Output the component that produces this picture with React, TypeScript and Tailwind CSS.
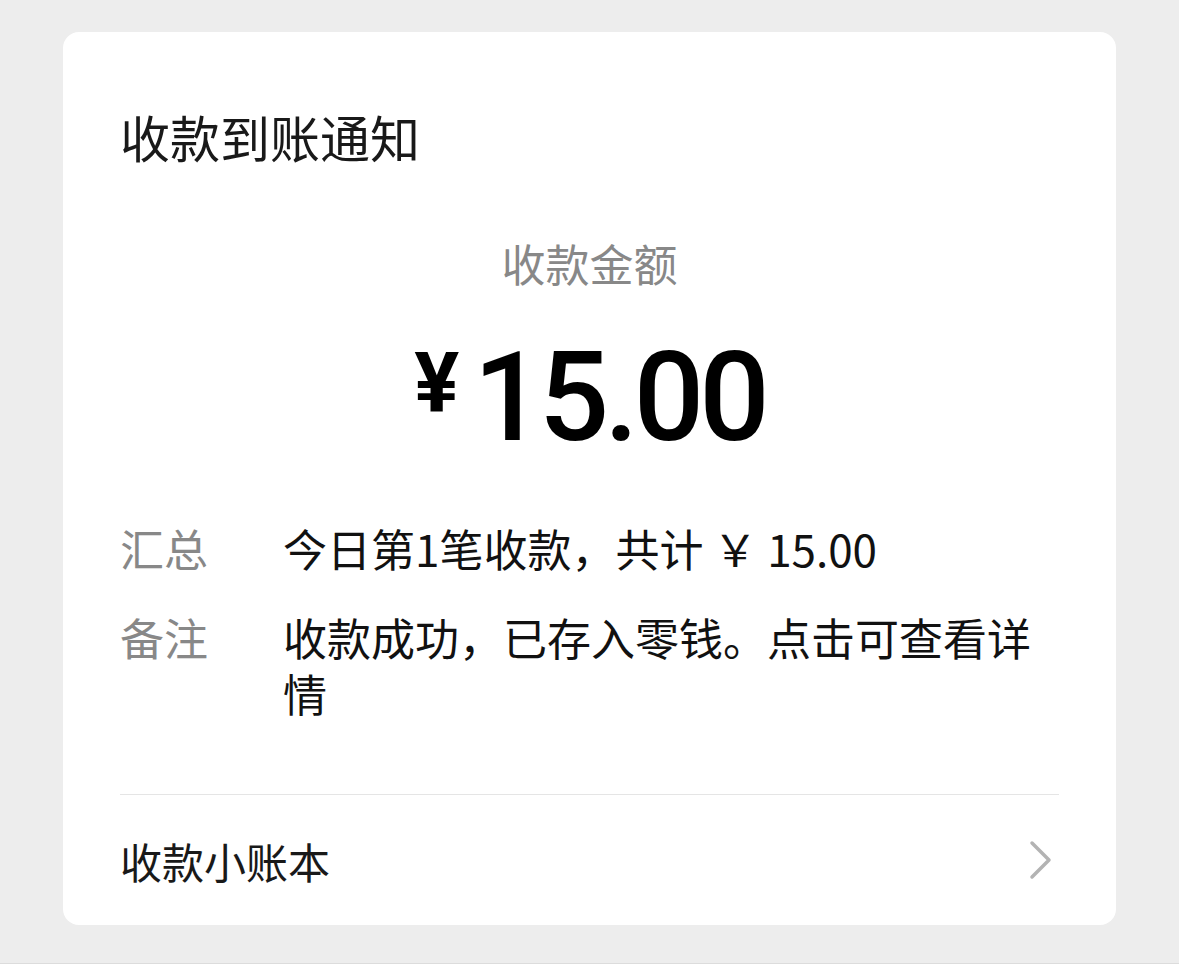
const cjk = "font-['Noto_Sans_CJK_SC','Noto_Sans',sans-serif]";

function Chevron() {
  return (
    <svg width="24" height="40" viewBox="0 0 24 40" fill="none" className="mr-[6px]">
      <polyline points="3,3 20,20 3,37" stroke="#b3b3b3" strokeWidth="3.5" strokeLinecap="round" strokeLinejoin="round" />
    </svg>
  );
}

function Row({ label, children }: { label: string; children: React.ReactNode }) {
  return (
    <div className="flex text-[44px] leading-[56px]">
      <span className="w-[163px] shrink-0 text-[#888888]">{label}</span>
      <span className="flex-1 text-[#111111]">{children}</span>
    </div>
  );
}

export default function App() {
  return (
    <div className={`h-[964px] bg-[#ededed] pt-[32px] px-[63px] border-b border-[#dcdcdc] ${cjk}`}>
      {/* card */}
      <div className="w-[1053px] h-[893px] bg-white rounded-2xl px-[57px] pt-[74px] flex flex-col">
        <div className="text-[50px] leading-[60px] text-[#191919]">收款到账通知</div>

        <div className="mt-[69px] text-center text-[44px] leading-[56px] text-[#888888]">收款金额</div>

        <div className="mt-[45px] flex justify-center items-start text-black">
          <span className="font-['Roboto',sans-serif] font-bold text-[84px] leading-none mt-[6px] mr-[14px]">¥</span>
          <span className="font-['Roboto',sans-serif] font-medium text-[124px] leading-none tracking-[-5px]">15.00</span>
        </div>

        <div className="mt-[60px] flex flex-col gap-[33px]">
          <Row label="汇总">今日第1笔收款，共计 ￥ 15.00</Row>
          <Row label="备注">收款成功，已存入零钱。点击可查看详情</Row>
        </div>

        <div className="mt-[73px] border-t border-[#e5e5e5] flex-1 flex items-center justify-between">
          <span className="text-[42px] text-[#191919]">收款小账本</span>
          <Chevron />
        </div>
      </div>
    </div>
  );
}
